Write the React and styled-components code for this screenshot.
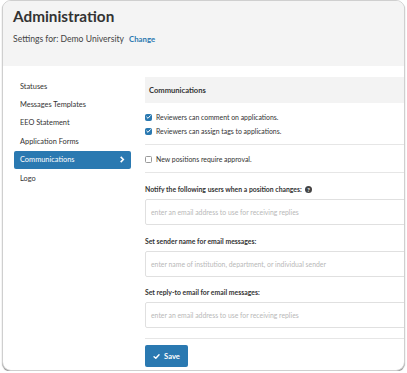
import React from "react";
import styled, { createGlobalStyle } from "styled-components";

const Global = createGlobalStyle`
  html, body { margin: 0; padding: 0; background: #fff; }
  body { font-family: Lato, "Open Sans", sans-serif; color: #333; }
  * { box-sizing: border-box; }
`;

const Frame = styled.div`
  margin: 0 2px 0 2px;
  width: 403px;
  height: 371px;
  border: 1px solid #cfcfcf;
  border-radius: 9px;
  box-shadow: 0 1px 1px rgba(0,0,0,0.45);
  overflow: hidden;
  background: #fff;
`;

const Header = styled.div`
  background: #f4f4f4;
  height: 65px;
  padding: 3px 10px 0;
`;

const Title = styled.h1`
  margin: 0;
  font-size: 15.3px;
  font-weight: 700;
  color: #333;
  line-height: 24px;
`;

const Sub = styled.div`
  margin-top: 6px;
  font-size: 8.6px;
  color: #444;
  display: flex;
  gap: 5px;
  align-items: baseline;
`;

const Link = styled.a`
  color: #2a78b0;
  font-weight: 700;
  font-size: 7.8px;
  text-decoration: none;
`;

const Body = styled.div`
  display: flex;
  gap: 14px;
  padding: 11px 0 0 11px;
`;

const Nav = styled.ul`
  list-style: none;
  margin: 0;
  padding: 0;
  width: 117px;
  flex: none;
`;

const NavItem = styled.li`
  height: 18.4px;
  display: flex;
  align-items: center;
  justify-content: space-between;
  padding: 0 6px;
  font-size: 7.4px;
  border-radius: 2px;
  background: ${(p) => (p.$active ? "#2a79b1" : "transparent")};
  color: ${(p) => (p.$active ? "#fff" : "#333")};
`;

const Content = styled.div`
  width: 280px;
  flex: none;
`;

const SectionHead = styled.div`
  background: #f3f3f3;
  height: 26px;
  display: flex;
  align-items: center;
  padding-left: 4px;
  font-weight: 700;
  font-size: 7.6px;
  color: #333;
`;

const Group = styled.div`
  padding: ${(p) => p.$pad || "7px 0"};
  border-bottom: 1px solid #e6e6e6;
  display: flex;
  flex-direction: column;
`;

const CheckRow = styled.label`
  display: flex;
  align-items: center;
  gap: 4px;
  height: 14px;
  font-size: 6.9px;
  color: #333;
`;

const Box = styled.span`
  width: 7px;
  height: 7px;
  border-radius: 1.5px;
  flex: none;
  display: flex;
  align-items: center;
  justify-content: center;
  background: ${(p) => (p.$checked ? "#2a79b1" : "#fff")};
  border: 1px solid ${(p) => (p.$checked ? "#2a79b1" : "#999")};
`;

const Field = styled.div`
  display: flex;
  flex-direction: column;
  margin-top: ${(p) => p.$top || "0"};
`;

const FieldLabel = styled.div`
  font-size: 6.85px;
  font-weight: 700;
  color: #333;
  height: 10px;
  line-height: 10px;
  display: flex;
  align-items: center;
  gap: 3px;
`;

const Input = styled.div`
  margin-top: 5px;
  height: 26px;
  border: 1px solid #e0e0e0;
  border-radius: 2px;
  display: flex;
  align-items: center;
  padding-left: 5px;
  font-size: 6.85px;
  color: #b8b8b8;
`;

const Divider = styled.div`
  margin-top: 10px;
  border-top: 1px solid #e6e6e6;
`;

const Button = styled.button`
  margin-top: 6px;
  width: 43px;
  height: 22px;
  border: none;
  border-radius: 2px;
  background: #2a79b1;
  color: #fff;
  font-family: Lato, sans-serif;
  font-weight: 700;
  font-size: 7.6px;
  display: flex;
  align-items: center;
  justify-content: center;
  gap: 4px;
  padding: 0;
`;

const Check = ({ size = 6 }) => (
  <svg width={size} height={size} viewBox="0 0 10 10">
    <path d="M1.5 5.2 L4 7.6 L8.6 2.4" fill="none" stroke="#fff" strokeWidth="2" strokeLinecap="round" strokeLinejoin="round" />
  </svg>
);

const Chevron = () => (
  <svg width="6" height="7" viewBox="0 0 6 8">
    <path d="M1.5 1 L4.5 4 L1.5 7" fill="none" stroke="#fff" strokeWidth="1.8" />
  </svg>
);

const Help = () => (
  <svg width="7" height="7" viewBox="0 0 10 10">
    <circle cx="5" cy="5" r="5" fill="#444" />
    <text x="5" y="8" textAnchor="middle" fontSize="8" fontWeight="700" fill="#fff" fontFamily="Lato, sans-serif">?</text>
  </svg>
);

const navItems = ["Statuses", "Messages Templates", "EEO Statement", "Application Forms", "Communications", "Logo"];

export default function App() {
  return (
    <>
      <Global />
      <Frame>
        <Header>
          <Title>Administration</Title>
          <Sub>
            <span>Settings for: Demo University</span>
            <Link>Change</Link>
          </Sub>
        </Header>
        <Body>
          <Nav>
            {navItems.map((n) => (
              <NavItem key={n} $active={n === "Communications"}>
                <span>{n}</span>
                {n === "Communications" && <Chevron />}
              </NavItem>
            ))}
          </Nav>
          <Content>
            <SectionHead>Communications</SectionHead>
            <Group $pad="7px 0 6px">
              <CheckRow>
                <Box $checked><Check /></Box>
                Reviewers can comment on applications.
              </CheckRow>
              <CheckRow>
                <Box $checked><Check /></Box>
                Reviewers can assign tags to applications.
              </CheckRow>
            </Group>
            <Group $pad="7px 0 6px">
              <CheckRow>
                <Box />
                New positions require approval.
              </CheckRow>
            </Group>
            <Field $top="11px">
              <FieldLabel>
                Notify the following users when a position changes: <Help />
              </FieldLabel>
              <Input>enter an email address to use for receiving replies</Input>
            </Field>
            <Field $top="11px">
              <FieldLabel>Set sender name for email messages:</FieldLabel>
              <Input>enter name of institution, department, or individual sender</Input>
            </Field>
            <Field $top="10px">
              <FieldLabel>Set reply-to email for email messages:</FieldLabel>
              <Input>enter an email address to use for receiving replies</Input>
            </Field>
            <Divider />
            <Button>
              <Check size={7} />
              Save
            </Button>
          </Content>
        </Body>
      </Frame>
    </>
  );
}
